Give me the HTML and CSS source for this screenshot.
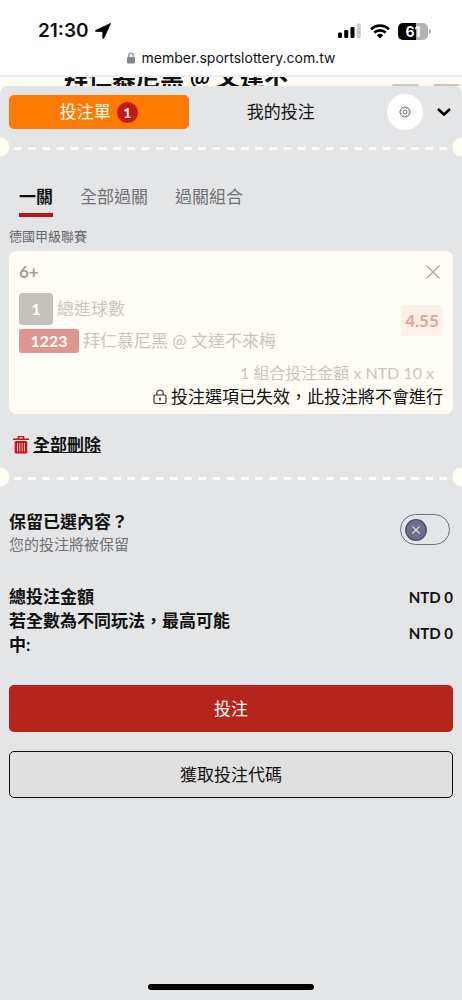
FILE: index.html
```html
<!DOCTYPE html>
<html lang="zh-TW">
<head>
<meta charset="utf-8">
<meta name="viewport" content="width=device-width, initial-scale=1">
<title>投注單</title>
<link rel="stylesheet" href="styles.css">
</head>
<body>
<header class="browser">
  <div class="status">
    <div class="clock">21:30
      <svg width="16" height="16" viewBox="0 0 16 16"><path d="M15.6.4 8.800 15.200c-.3.6-1 .5-1-.2V8.400H1c-.7 0-.8-.8-.2-1.100z" stroke="#000" stroke-width=".8"/></svg>
    </div>
    <div class="signals">
      <svg width="24" height="16" viewBox="0 0 24 16"><rect x="0" y="9.500" width="4" height="5.500" rx="1.200"/><rect x="6.200" y="7" width="4" height="8" rx="1.200"/><rect x="12.500" y="4" width="4" height="11" rx="1.200"/><rect x="18.800" y="0.500" width="4" height="14.500" rx="1.200" fill="#ccc"/></svg>
      <svg width="20" height="15" viewBox="0 0 20 15"><g fill="none" stroke="#000" stroke-width="2.600"><path d="M1 5.200a13 13 0 0 1 18 0"/><path d="M4.300 8.600a8.300 8.300 0 0 1 11.400 0"/></g><path d="M6.800 11.300a4.700 4.700 0 0 1 6.400 0L10 14.500z"/></svg>
      <div class="battery"><span class="cell">61</span><span class="cap"></span></div>
    </div>
  </div>
  <div class="address">
    <svg width="8" height="12" viewBox="0 0 8 12"><rect y="5" width="8" height="6.500" rx="1" fill="#85858a"/><path d="M1.800 5.500V3.200a2.200 2.200 0 0 1 4.400 0v2.300" fill="none" stroke="#85858a" stroke-width="1.200"/></svg>
    <span>member.sportslottery.com.tw</span>
  </div>
</header>
<div class="behind">
  <div class="match">拜仁慕尼黑 @ 文達不</div>
  <div class="chips"><span></span><span></span></div>
</div>
<main class="sheet">
  <nav class="top">
    <button class="slip">投注單 <span class="count">1</span></button>
    <button class="mine">我的投注</button>
    <button class="gear" aria-label="設定"><svg width="12" height="12" viewBox="0 0 24 24" fill="none" stroke="#444" stroke-width="1.500"><path d="M9.800 2h4.400l.8 2.600 2.700-1.200 3 3-1.300 2.600 2.600.8v4.400l-2.600.8 1.300 2.700-3 3-2.700-1.300-.8 2.600H9.800L9 19.400l-2.700 1.300-3-3L4.600 15 2 14.200V9.800L4.600 9 3.300 6.400l3-3L9 4.600z"/><circle cx="12" cy="12" r="4"/></svg></button>
    <button class="fold" aria-label="收合"><svg width="14" height="10" viewBox="0 0 14 10"><path d="m1 2 6 5.500L13 2" fill="none" stroke="#000" stroke-width="2.600"/></svg></button>
  </nav>
  <div class="tear"><i></i></div>
  <nav class="modes">
    <button class="mode on">一關</button>
    <button class="mode">全部過關</button>
    <button class="mode">過關組合</button>
  </nav>
  <div class="body">
    <p class="league">德國甲級聯賽</p>
    <section class="card">
      <div class="pick"><span>6+</span>
        <button class="close" aria-label="移除"><svg width="16" height="16" viewBox="0 0 16 16"><path d="m1.500 1.500 13 13m0-13-13 13" stroke="#a5a49e" stroke-width="1.300"/></svg></button>
      </div>
      <div class="event">
        <div class="lines">
          <div class="line"><b class="tag grey">1</b><span>總進球數</span></div>
          <div class="line"><b class="tag red">1223</b><span>拜仁慕尼黑 @ 文達不來梅</span></div>
        </div>
        <b class="odds">4.55</b>
      </div>
      <p class="stake">1 組合投注金額 x NTD 10 x</p>
      <p class="expired"><svg width="14" height="16" viewBox="0 0 14 16" fill="none" stroke="#333" stroke-width="1.200"><rect x="1" y="6" width="12" height="8.500" rx="1.800"/><path d="M3.800 6V4.200a3.200 3.200 0 0 1 6.400 0V6"/><path d="M7 8.800v2.800" stroke-width="1.600"/></svg><span>投注選項已失效，此投注將不會進行</span></p>
    </section>
    <button class="clear"><svg width="16" height="18" viewBox="0 0 16 18"><path d="M5.500 2.500v-2h5v2M0 3.200h16" fill="none" stroke="#c4161c" stroke-width="1.500"/><rect x="1.700" y="5" width="12.600" height="12.500" rx="1.500" fill="#c4161c"/><path d="M4.500 7v8.500M6.800 7v8.500M9.200 7v8.500M11.500 7v8.500" stroke="#efc9cb" stroke-width=".9"/></svg><span>全部刪除</span></button>
  </div>
  <div class="tear"><i></i></div>
  <div class="body">
    <div class="keep">
      <label for="keep"><strong>保留已選內容？</strong><small>您的投注將被保留</small></label>
      <div class="switch"><input type="checkbox" id="keep"><svg width="22" height="22" viewBox="0 0 22 22"><circle cx="11" cy="11" r="10.300" fill="#706d89" stroke="#4c4870" stroke-width="1.200"/><path d="m7.300 7.300 7.400 7.400m0-7.400-7.400 7.400" stroke="#e4e5e7" stroke-width="1.200"/></svg></div>
    </div>
    <dl class="totals">
      <div><dt>總投注金額</dt><dd>NTD 0</dd></div>
      <div><dt>若全數為不同玩法，最高可能中:</dt><dd>NTD 0</dd></div>
    </dl>
    <button class="action primary">投注</button>
    <button class="action plain">獲取投注代碼</button>
  </div>
  <div class="home"></div>
</main>
</body>
</html>
```

FILE: styles.css
```css
* { box-sizing: border-box; }
body {
  margin: 0;
  min-height: 100vh;
  display: flex;
  flex-direction: column;
  background: #fffdf5;
  color: #111;
  font: 17px/24px Lato, "Noto Sans CJK TC", sans-serif;
}
button {
  border: 0;
  padding: 0;
  background: none;
  color: inherit;
  font: inherit;
}
svg { display: block; flex: none; }
p, dl, dd { margin: 0; }

.browser {
  height: 77px;
  padding-top: 19px;
  background: #fff;
  border-bottom: 2px solid #ececec;
  font-family: Inter, sans-serif;
}
.status {
  display: flex;
  justify-content: space-between;
  padding: 0 31px 0 38px;
}
.clock {
  display: flex;
  align-items: center;
  gap: 6px;
  font-size: 19px;
  font-weight: 600;
}
.signals { display: flex; align-items: center; gap: 8px; }
.battery { display: flex; align-items: center; gap: 1px; }
.cell {
  width: 30px;
  height: 17px;
  border-radius: 5px;
  background: linear-gradient(to right, #000 60%, #b3b3b3 60%);
  color: #fff;
  font-size: 14px;
  line-height: 17px;
  font-weight: 700;
  text-align: center;
}
.cap { width: 2px; height: 5px; border-radius: 0 2px 2px 0; background: #b3b3b3; }
.address {
  display: flex;
  justify-content: center;
  align-items: center;
  gap: 7px;
  margin-top: 5px;
  font-size: 14px;
  line-height: 20px;
}

.behind {
  height: 9px;
  padding: 0 2px 0 64px;
  display: flex;
  justify-content: space-between;
  align-items: flex-end;
  overflow: hidden;
}
.match { font-size: 24px; line-height: 18px; font-weight: 700; white-space: nowrap; }
.chips { display: flex; gap: 14px; }
.chips span { width: 27px; height: 2px; border-radius: 2px 2px 0 0; background: #c9c9c4; }

.sheet {
  flex: 1;
  display: flex;
  flex-direction: column;
  background: #e4e5e7;
  border-radius: 8px 8px 0 0;
  overflow: hidden;
}
.top { display: flex; align-items: center; padding: 8px 11px 0 9px; }
.slip {
  flex: 180;
  height: 34px;
  display: flex;
  justify-content: center;
  align-items: center;
  gap: 6px;
  border-radius: 5px;
  background: #ff7a00;
  color: #fff;
}
.count {
  width: 21px;
  height: 21px;
  border-radius: 50%;
  background: #c11b13;
  font-size: 14px;
  line-height: 21px;
  font-weight: 700;
}
.mine { flex: 185; }
.gear {
  width: 36px;
  height: 36px;
  margin: 0 14px;
  display: grid;
  place-items: center;
  border-radius: 50%;
  background: #fff;
}

.tear {
  height: 20px;
  display: flex;
  align-items: center;
  padding: 2px 8px 0 14px;
  background:
    radial-gradient(circle at 0 50%, #fffdf5 9px, transparent 10px),
    radial-gradient(circle at 100% 50%, #fffdf5 9px, transparent 10px);
}
.tear i {
  flex: 1;
  height: 3px;
  background: linear-gradient(to right, #fffdf5 50%, transparent 50%) 0 0 / 14px 3px round;
}
.top + .tear { margin-top: 7px; }

.modes { display: flex; gap: 27px; padding: 26px 19px 0; color: #707174; }
.mode { height: 34px; padding-bottom: 2px; border-bottom: 4px solid transparent; }
.mode.on { color: #111; font-weight: 700; border-color: #bd1216; }

.body { padding: 0 9px; }
.league { margin-top: 9px; color: #66676a; font-size: 13px; line-height: 20px; }
.card {
  margin-top: 5px;
  padding: 9px 10px 5px;
  border-radius: 7px;
  background: #fffdf5;
}
.pick { display: flex; justify-content: space-between; color: #a09f99; font-weight: 700; }
.close { display: grid; place-items: center; margin-right: 2px; }
.event {
  display: flex;
  justify-content: space-between;
  align-items: center;
  margin-top: 9px;
  color: #c7c6c0;
}
.lines { display: grid; gap: 4px; }
.line { display: flex; align-items: center; gap: 4px; }
.tag { border-radius: 3px; color: #fffdf5; text-align: center; font-size: 16px; }
.grey { width: 34px; line-height: 32px; background: #c3c2bc; }
.red { width: 60px; line-height: 24px; background: #e09690; }
.odds {
  width: 42px;
  margin-bottom: 6px;
  border-radius: 4px;
  background: #fdf1ea;
  color: #e4a39b;
  font-size: 17px;
  line-height: 31px;
  text-align: center;
}
.stake { margin-top: 8px; padding-right: 9px; color: #c7c6c0; font-size: 16px; text-align: right; }
.expired { display: flex; justify-content: flex-end; align-items: center; gap: 4px; }
.clear {
  display: flex;
  align-items: center;
  gap: 4px;
  margin: 19px 0 10px 4px;
  font-weight: 700;
}
.clear span { text-decoration: underline; }

.keep { display: flex; justify-content: space-between; align-items: flex-start; margin-top: 23px; }
.keep label { display: grid; }
.keep small { color: #707174; font-size: 15px; line-height: 20px; }
.switch { display: grid; align-items: center; margin: 4px 3px 0 0; }
.switch > * { grid-area: 1 / 1; }
.switch svg { margin-left: 5px; pointer-events: none; }
.switch input {
  appearance: none;
  width: 50px;
  height: 31px;
  margin: 0;
  border: 1px solid #706d89;
  border-radius: 16px;
}

.totals { margin-top: 31px; font-weight: 700; }
.totals div { display: flex; justify-content: space-between; align-items: center; }
.totals dt { width: 52%; }
.totals dd { font-size: 15px; }
.action {
  display: block;
  width: 100%;
  height: 47px;
  border-radius: 5px;
}
.primary { margin-top: 28px; background: #b5251b; color: #fff; }
.plain { margin-top: 19px; border: 1px solid #111; background: #e0e0e0; }
.home {
  width: 36%;
  height: 6px;
  margin: auto auto 10px;
  border-radius: 3px;
  background: #000;
}
```
